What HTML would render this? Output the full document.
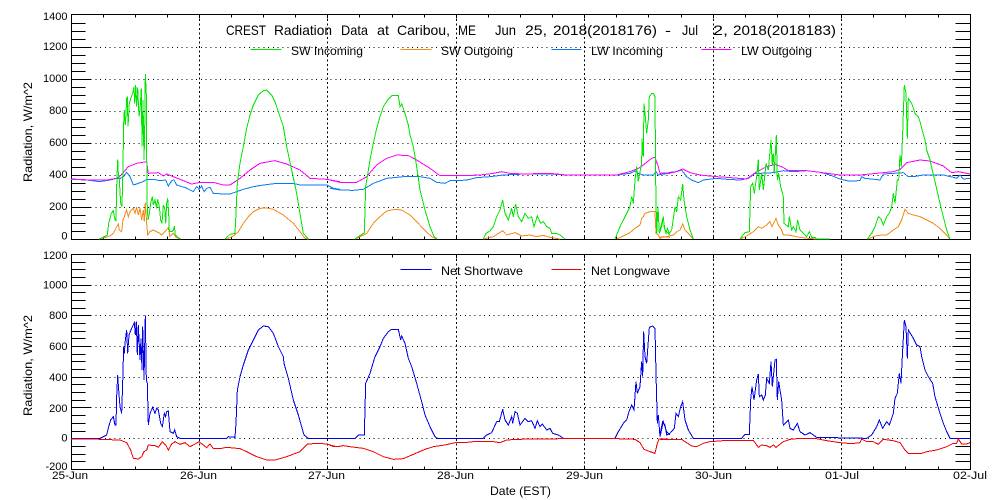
<!DOCTYPE html>
<html>
<head>
<meta charset="utf-8">
<title>CREST Radiation Data at Caribou, ME</title>
<style>
html,body{margin:0;padding:0;background:#fff;width:1000px;height:500px;overflow:hidden}
svg{display:block}
text{font-family:"Liberation Sans",sans-serif;fill:#000}
.t{font-size:14px}
.l{font-size:12px}
.n{font-size:11px;text-anchor:end}
.x{font-size:11px}
polyline{fill:none;stroke-width:3;stroke-linejoin:miter}
</style>
</head>
<body>
<svg width="1000" height="500" viewBox="0 0 1000 500" xmlns="http://www.w3.org/2000/svg">
<rect width="1000" height="500" fill="#fff"/>

<g transform="translate(.5 .5)" fill="none" stroke="#000" stroke-width="1" shape-rendering="crispEdges">
<!-- frames -->
<rect x="71" y="14" width="899" height="225"/>
<rect x="71" y="254" width="899" height="215"/>
<!-- horizontal dotted grids -->
<path stroke-dasharray="1 3.8" d="M90 47H952M90 79H952M90 111H952M90 143H952M90 175H952M90 207H952M90 285H952M90 315H952M90 346H952M90 377H952M90 407H952M90 438H952"/>
<!-- vertical dashed grids -->
<path stroke-dasharray="2 2.5" d="M199 14V239M327 14V239M456 14V239M584 14V239M713 14V239M841 14V239M199 254V469M327 254V469M456 254V469M584 254V469M713 254V469M841 254V469"/>
<!-- top panel y ticks -->
<path d="M71 231h14M71 223h14M71 215h14M71 199h14M71 191h14M71 183h14M71 167h14M71 159h14M71 151h14M71 135h14M71 127h14M71 119h14M71 103h14M71 95h14M71 87h14M71 71h14M71 63h14M71 55h14M71 39h14M71 31h14M71 23h14"/>
<path d="M71 207h19M71 175h19M71 143h19M71 111h19M71 79h19M71 47h19"/>
<path d="M970 231h-15M970 223h-15M970 215h-15M970 199h-15M970 191h-15M970 183h-15M970 167h-15M970 159h-15M970 151h-15M970 135h-15M970 127h-15M970 119h-15M970 103h-15M970 95h-15M970 87h-15M970 71h-15M970 63h-15M970 55h-15M970 39h-15M970 31h-15M970 23h-15"/>
<path d="M970 207h-18M970 175h-18M970 143h-18M970 111h-18M970 79h-18M970 47h-18"/>
<!-- bottom panel y ticks -->
<path d="M71 461h14M71 454h14M71 446h14M71 431h14M71 423h14M71 415h14M71 400h14M71 392h14M71 384h14M71 369h14M71 361h14M71 354h14M71 338h14M71 331h14M71 323h14M71 308h14M71 300h14M71 292h14M71 277h14M71 269h14M71 262h14"/>
<path d="M71 438h19M71 407h19M71 377h19M71 346h19M71 315h19M71 285h19"/>
<path d="M970 461h-15M970 454h-15M970 446h-15M970 431h-15M970 423h-15M970 415h-15M970 400h-15M970 392h-15M970 384h-15M970 369h-15M970 361h-15M970 354h-15M970 338h-15M970 331h-15M970 323h-15M970 308h-15M970 300h-15M970 292h-15M970 277h-15M970 269h-15M970 262h-15"/>
<path d="M970 438h-18M970 407h-18M970 377h-18M970 346h-18M970 315h-18M970 285h-18"/>
<!-- x ticks -->
<path d="M103 14v3M135 14v3M167 14v3M231 14v3M263 14v3M295 14v3M359 14v3M392 14v3M424 14v3M488 14v3M520 14v3M552 14v3M616 14v3M648 14v3M681 14v3M745 14v3M777 14v3M809 14v3M873 14v3M905 14v3M938 14v3M103 239v-3M135 239v-3M167 239v-3M231 239v-3M263 239v-3M295 239v-3M359 239v-3M392 239v-3M424 239v-3M488 239v-3M520 239v-3M552 239v-3M616 239v-3M648 239v-3M681 239v-3M745 239v-3M777 239v-3M809 239v-3M873 239v-3M905 239v-3M938 239v-3"/>
<path d="M103 254v3M135 254v3M167 254v3M231 254v3M263 254v3M295 254v3M359 254v3M392 254v3M424 254v3M488 254v3M520 254v3M552 254v3M616 254v3M648 254v3M681 254v3M745 254v3M777 254v3M809 254v3M873 254v3M905 254v3M938 254v3M103 469v-3M135 469v-3M167 469v-3M231 469v-3M263 469v-3M295 469v-3M359 469v-3M392 469v-3M424 469v-3M488 469v-3M520 469v-3M552 469v-3M616 469v-3M648 469v-3M681 469v-3M745 469v-3M777 469v-3M809 469v-3M873 469v-3M905 469v-3M938 469v-3"/>
<path d="M199 14v4M327 14v4M456 14v4M584 14v4M713 14v4M841 14v4M199 239v-4M327 239v-4M456 239v-4M584 239v-4M713 239v-4M841 239v-4M199 254v4M327 254v4M456 254v4M584 254v4M713 254v4M841 254v4M199 469v-4M327 469v-4M456 469v-4M584 469v-4M713 469v-4M841 469v-4"/>
<!-- legends -->
<path stroke="#00e600" d="M250 49h31"/>
<path stroke="#f58a1a" d="M400 49h31"/>
<path stroke="#0a7cf0" d="M551 49h30"/>
<path stroke="#ff00ff" d="M701 49h30"/>
<path stroke="#0000e6" d="M400 269h31"/>
<path stroke="#f00000" d="M551 269h30"/>
</g>

<!-- top panel curves -->
<g shape-rendering="crispEdges">
<g transform="scale(.33333)">
<polyline stroke="#0a7cf0" points="213,538 260,540 300,545 330,540 350,535 362,535 370,530 380,517 390,530 400,555 410,552 420,548 430,545 440,538 460,538 470,540 480,542 497,540 505,558 515,542 522,540 530,555 545,560 555,562 570,570 580,575 590,560 597,568 605,558 612,575 620,565 630,562 640,580 670,582 690,582 710,575 730,568 760,560 790,555 830,550 880,550 900,555 930,555 980,555 1000,565 1020,568"/>
<polyline stroke="#ff00ff" points="213,537 270,540 320,540 350,535 362,527 385,500 410,490 440,485 445,520 475,518 490,528 500,522 520,530 545,540 575,552 600,547 640,547 670,555 690,555 720,535 750,510 780,490 825,482 860,492 900,510 930,535 980,538 1020,545"/>
<polyline stroke="#f58a1a" points="297,717 310,714 330,708 340,700 350,680 355,672 358,690 365,695 369,660 373,650 376,640 380,630 385,650 390,635 400,625 405,640 410,622 415,645 420,625 425,660 430,630 433,665 436,607 440,670 443,705 450,695 460,690 470,695 480,700 485,705 495,695 505,683 510,710 520,700 528,712 540,717"/>
<polyline stroke="#f58a1a" points="680,717 700,708 715,695 730,670 745,650 760,635 780,625 800,624 820,628 850,645 880,670 900,695 915,715 925,717"/>
<polyline stroke="#00e600" points="297,717 310,712 322,705 326,670 334,640 340,632 345,660 348,662 350,560 353,478 355,520 358,540 362,610 366,620 369,500 371,370 373,330 376,375 378,340 380,295 382,290 384,380 388,310 394,290 398,280 402,260 404,310 407,255 410,320 413,262 417,350 420,330 424,265 426,440 429,300 432,480 434,400 436,222 439,285 441,600 444,660 448,640 452,610 457,590 460,615 465,600 470,625 473,598 478,620 482,660 486,670 490,615 494,625 497,670 500,610 503,595 506,640 508,695 515,695 520,690 523,678 526,705 533,712 542,717"/>
<polyline stroke="#00e600" points="675,717 690,703 705,700 708,640 712,550 720,490 730,440 740,385 750,345 760,315 775,285 790,272 800,270 815,285 825,305 835,335 850,380 860,440 875,510 890,580 900,640 910,700 925,717"/>
</g>
<g transform="translate(330 0) scale(.33333)">
<polyline stroke="#0a7cf0" points="0,565 30,570 70,571 100,568 130,550 170,535 220,530 270,530 300,535 320,547 345,550 360,542 380,542 410,540 440,533 480,530 520,525 560,523 600,522 660,522 710,525 860,525 900,520 918,512 925,520 940,525 970,525 978,515 985,525 1000,522 1020,520"/>
<polyline stroke="#ff00ff" points="0,540 30,547 80,547 110,530 140,495 170,475 200,465 235,467 260,480 300,505 330,527 380,527 400,527 450,525 490,520 515,515 540,520 580,522 660,520 710,525 860,525 900,515 925,505 940,495 965,475 975,472 985,500 990,520 1020,518"/>
<polyline stroke="#f58a1a" points="75,717 90,710 110,700 130,670 150,650 170,633 195,628 215,630 240,645 260,665 285,692 305,710 320,717"/>
<polyline stroke="#f58a1a" points="460,717 490,710 518,692 530,705 555,698 575,708 600,705 620,710 640,706 660,712 690,717"/>
<polyline stroke="#f58a1a" points="860,717 880,708 900,698 915,685 930,675 935,655 940,650 945,640 960,635 975,635 978,700 985,705 990,715 1000,710 1020,712"/>
<polyline stroke="#00e600" points="75,717 88,708 103,698 107,560 112,530 120,480 130,430 140,385 150,350 160,320 175,297 185,287 205,287 210,320 215,312 225,340 235,375 240,405 250,440 260,500 270,570 285,630 300,680 312,710 322,717"/>
<polyline stroke="#00e600" points="460,717 468,700 480,693 490,680 500,650 510,630 518,600 525,640 535,660 545,625 550,650 557,612 565,650 575,665 585,640 595,655 605,650 612,680 622,648 632,670 640,665 650,680 660,685 665,700 680,700 690,705 705,717"/>
<polyline stroke="#00e600" points="855,717 870,680 880,660 890,640 900,620 905,590 910,610 915,540 920,500 925,545 930,515 935,490 936,415 940,470 942,310 946,350 950,400 955,360 958,290 965,280 970,280 975,290 977,540 980,700 984,620 988,700 995,680 1000,655 1005,690 1010,695 1015,700 1020,705"/>
</g>
<g transform="translate(660 0) scale(.33333)">
<polyline stroke="#0a7cf0" points="30,517 50,515 65,510 80,530 95,540 115,548 130,540 170,535 200,538 240,540 265,535 285,520 300,520 340,518 370,512 400,515 440,512 480,517 510,525 540,537 565,543 600,542 605,530 615,535 660,540 670,522 700,520 730,518 745,530 760,530 790,525 850,525 880,532 890,535 900,525 910,537 930,535"/>
<polyline stroke="#ff00ff" points="0,520 40,518 68,507 90,518 120,525 170,530 200,532 260,537 290,515 320,500 345,493 365,500 385,512 440,512 480,517 540,525 600,525 650,520 700,515 720,508 740,488 780,480 810,483 850,498 875,518 895,515 930,522"/>
<polyline stroke="#f58a1a" points="0,712 20,710 40,705 50,695 60,690 68,672 75,690 85,700 100,717"/>
<polyline stroke="#f58a1a" points="240,717 260,708 280,695 295,680 305,685 320,675 330,665 336,680 348,655 355,675 365,690 370,705 385,705 400,708 420,712 445,715 470,717"/>
<polyline stroke="#f58a1a" points="625,717 645,708 665,705 680,705 700,690 715,680 725,660 735,628 745,640 760,645 780,650 800,660 820,670 840,685 855,700 870,717"/>
<polyline stroke="#00e600" points="0,690 5,670 10,650 13,685 18,700 22,685 28,700 35,690 45,620 50,635 55,590 62,600 68,552 72,600 80,650 90,690 100,717"/>
<polyline stroke="#00e600" points="240,717 255,698 268,695 272,560 278,550 283,580 290,530 295,478 298,570 305,520 310,570 318,490 325,510 333,420 337,495 340,460 343,520 349,405 352,540 356,520 362,560 370,590 372,670 385,680 388,650 395,690 400,680 408,695 413,660 420,690 430,700 440,710 448,695 455,712 465,712 470,717 510,717"/>
<polyline stroke="#00e600" points="622,717 635,700 645,680 655,650 662,655 670,675 680,650 688,640 695,620 700,580 705,610 712,540 716,540 720,465 724,500 728,400 733,255 738,280 742,415 745,295 755,310 765,340 775,350 780,365 785,385 795,420 800,450 810,480 825,545 840,610 850,650 860,690 870,717"/>
</g>

<!-- bottom panel curves -->
<g transform="translate(0 250) scale(.33333)">
<polyline stroke="#0000e6" points="213,565 300,565 320,555 326,530 332,510 340,500 345,525 348,525 350,440 353,375 356,420 360,470 365,490 368,400 371,290 373,310 376,270 380,240 383,310 387,255 395,235 403,218 406,255 409,215 412,315 415,225 420,330 423,265 426,360 428,230 432,390 436,197 439,390 442,400 445,525 450,490 458,472 465,490 470,475 475,480 482,520 487,530 493,490 497,500 500,485 505,483 510,545 520,550 524,540 530,560 540,565 680,565 685,560 705,562 708,520 712,420 720,380 730,345 745,300 760,270 775,240 790,228 805,230 820,250 835,290 850,320 852,340 865,385 880,450 895,495 902,520 912,555 925,565 1020,565"/>
<polyline stroke="#f00000" points="213,567 320,568 345,570 360,570 380,578 392,600 400,625 415,627 425,620 432,605 440,600 445,585 465,587 475,592 487,575 497,585 505,600 515,582 525,575 540,583 555,578 570,590 585,582 597,575 610,585 620,593 630,582 640,595 665,595 680,592 700,594 720,596 740,605 770,620 800,630 825,630 860,620 900,605 922,582 960,580 985,583 1000,590 1020,590"/>
</g>
<g transform="translate(330 250) scale(.33333)">
<polyline stroke="#0000e6" points="0,565 75,565 85,555 103,555 107,400 120,370 135,320 150,290 160,265 175,245 185,238 205,238 212,270 215,258 225,280 235,325 245,350 260,400 275,455 285,495 300,530 315,560 322,565 460,565 470,555 485,548 500,515 508,515 518,478 525,510 535,525 545,500 548,520 555,485 562,490 570,525 585,505 595,515 605,512 615,535 622,512 630,530 637,522 650,540 660,535 668,550 685,555 700,565 855,565 865,545 880,520 890,510 897,485 905,465 912,480 918,395 922,430 930,410 935,335 938,380 941,245 945,320 950,340 958,232 968,228 975,235 978,370 982,520 985,495 990,560 1000,515 1010,545 1020,555"/>
<polyline stroke="#f00000" points="0,585 20,590 40,587 60,590 100,595 130,605 160,620 190,628 220,626 250,613 285,598 310,590 345,585 380,577 410,577 430,575 490,575 510,578 530,570 560,568 700,566 860,566 915,568 930,578 942,598 960,605 975,610 982,580 987,567 1020,568"/>
</g>
<g transform="translate(660 250) scale(.33333)">
<polyline stroke="#0000e6" points="30,550 43,535 48,490 55,500 62,470 68,455 75,510 85,540 100,565 245,565 255,553 268,553 272,450 276,410 282,450 290,390 295,372 298,440 305,435 310,450 316,435 320,385 328,400 333,335 337,410 341,370 345,330 349,328 352,450 356,395 365,450 370,525 385,510 390,535 400,540 412,520 420,545 435,555 450,548 470,562 620,565 635,555 650,530 658,510 668,535 680,515 688,525 700,490 705,445 712,430 718,370 723,400 728,300 733,210 738,230 742,325 745,240 760,265 770,285 780,290 785,320 795,360 805,380 818,400 825,440 840,490 850,520 860,545 870,565 930,565"/>
<polyline stroke="#0000e6" points="0,555 8,515 15,525 20,555 30,550"/>
<polyline stroke="#f00000" points="0,568 65,568 80,578 95,588 110,590 130,580 150,575 190,572 280,571 295,592 305,585 320,587 330,592 340,585 348,592 370,575 390,568 420,565 470,566 500,572 540,578 575,581 600,578 605,567 620,575 640,575 655,583 670,568 700,572 720,578 735,600 745,610 785,610 800,605 830,600 860,590 880,580 890,580 895,567 905,582 920,582 930,578"/>
</g>
</g>

<!-- title -->
<g class="t">
<text class="t" x="226" y="35" textLength="40" lengthAdjust="spacingAndGlyphs">CREST</text>
<text class="t" x="274" y="35" textLength="58" lengthAdjust="spacingAndGlyphs">Radiation</text>
<text class="t" x="341" y="35" textLength="27" lengthAdjust="spacingAndGlyphs">Data</text>
<text class="t" x="377" y="35" textLength="12" lengthAdjust="spacingAndGlyphs">at</text>
<text class="t" x="397" y="35" textLength="53" lengthAdjust="spacingAndGlyphs">Caribou,</text>
<text class="t" x="458" y="35" textLength="18" lengthAdjust="spacingAndGlyphs">ME</text>
<text class="t" x="495" y="35" textLength="21" lengthAdjust="spacingAndGlyphs">Jun</text>
<text class="t" x="525" y="35" textLength="22" lengthAdjust="spacingAndGlyphs">25,</text>
<text class="t" x="553" y="35" textLength="104" lengthAdjust="spacingAndGlyphs">2018(2018176)</text>
<text class="t" x="665" y="35" textLength="6" lengthAdjust="spacingAndGlyphs">-</text>
<text class="t" x="682" y="35" textLength="16" lengthAdjust="spacingAndGlyphs">Jul</text>
<text class="t" x="713" y="35" textLength="15" lengthAdjust="spacingAndGlyphs">2,</text>
<text class="t" x="733" y="35" textLength="103" lengthAdjust="spacingAndGlyphs">2018(2018183)</text>
</g>

<!-- legends -->
<text class="l" x="291" y="55" textLength="72" lengthAdjust="spacingAndGlyphs">SW Incoming</text>
<text class="l" x="441" y="55" textLength="72" lengthAdjust="spacingAndGlyphs">SW Outgoing</text>
<text class="l" x="591" y="55" textLength="72" lengthAdjust="spacingAndGlyphs">LW Incoming</text>
<text class="l" x="741" y="55" textLength="71" lengthAdjust="spacingAndGlyphs">LW Outgoing</text>
<text class="l" x="441" y="275" textLength="82" lengthAdjust="spacingAndGlyphs">Net Shortwave</text>
<text class="l" x="591" y="275" textLength="79" lengthAdjust="spacingAndGlyphs">Net Longwave</text>

<!-- y labels, top -->
<text class="n" x="67.5" y="20">1400</text>
<text class="n" x="67.5" y="50">1200</text>
<text class="n" x="67.5" y="82">1000</text>
<text class="n" x="67.5" y="114">800</text>
<text class="n" x="67.5" y="146">600</text>
<text class="n" x="67.5" y="178">400</text>
<text class="n" x="67.5" y="210">200</text>
<text class="n" x="67.5" y="239.5">0</text>
<!-- y labels, bottom -->
<text class="n" x="67.5" y="259">1200</text>
<text class="n" x="67.5" y="288.5">1000</text>
<text class="n" x="67.5" y="319">800</text>
<text class="n" x="67.5" y="350">600</text>
<text class="n" x="67.5" y="381">400</text>
<text class="n" x="67.5" y="412">200</text>
<text class="n" x="67.5" y="441.5">0</text>
<text class="n" x="67.5" y="470">-200</text>

<!-- y titles -->
<text class="l" transform="translate(32 182) rotate(-90)" textLength="100" lengthAdjust="spacingAndGlyphs">Radiation, W/m^2</text>
<text class="l" transform="translate(32 416) rotate(-90)" textLength="101" lengthAdjust="spacingAndGlyphs">Radiation, W/m^2</text>

<!-- x labels -->
<text class="x" x="52" y="479" textLength="36" lengthAdjust="spacingAndGlyphs">25-Jun</text>
<text class="x" x="180" y="479" textLength="37" lengthAdjust="spacingAndGlyphs">26-Jun</text>
<text class="x" x="308" y="479" textLength="37" lengthAdjust="spacingAndGlyphs">27-Jun</text>
<text class="x" x="437" y="479" textLength="37" lengthAdjust="spacingAndGlyphs">28-Jun</text>
<text class="x" x="566" y="479" textLength="37" lengthAdjust="spacingAndGlyphs">29-Jun</text>
<text class="x" x="695" y="479" textLength="37" lengthAdjust="spacingAndGlyphs">30-Jun</text>
<text class="x" x="825" y="479" textLength="34" lengthAdjust="spacingAndGlyphs">01-Jul</text>
<text class="x" x="953" y="479" textLength="34" lengthAdjust="spacingAndGlyphs">02-Jul</text>
<text class="l" x="490" y="495" textLength="61" lengthAdjust="spacingAndGlyphs">Date (EST)</text>
</svg>
</body>
</html>
